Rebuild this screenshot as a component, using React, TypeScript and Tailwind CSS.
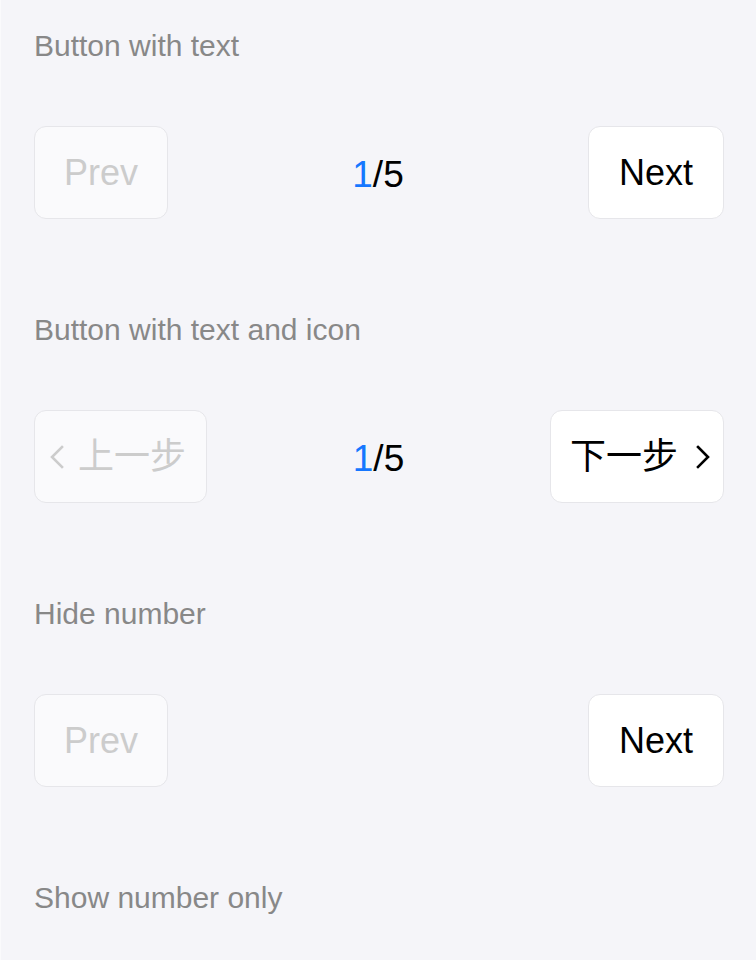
import React from 'react';

const Chevron: React.FC<{ dir: 'left' | 'right'; className?: string }> = ({ dir, className }) => (
  <svg width="14" height="24" viewBox="0 0 14 24" fill="none" className={className}>
    <polyline
      points={dir === 'left' ? '12,2 2,12 12,22' : '2,2 12,12 2,22'}
      stroke="currentColor"
      strokeWidth="2.6"
      strokeLinecap="square"
      strokeLinejoin="miter"
    />
  </svg>
);

const PageButton: React.FC<{ disabled?: boolean; className?: string; children: React.ReactNode }> = ({
  disabled,
  className = 'px-[29px]',
  children,
}) => (
  <button
    className={`h-[93px] rounded-[12px] border border-[#e6e6ea] flex items-center text-[36px] leading-none ${className} ${
      disabled ? 'bg-[#fafafc] text-[#cccccc]' : 'bg-white text-black'
    }`}
  >
    {children}
  </button>
);

const Counter = () => (
  <div className="text-[37px] leading-none text-black pt-[3px]">
    <span className="text-[#1677ff]">1</span>/5
  </div>
);

const Section: React.FC<{ title: string; children?: React.ReactNode }> = ({ title, children }) => (
  <section className="pt-[26px] pb-[65px]">
    <h3 className="text-[30px] leading-[40px] text-[#888888] font-normal">{title}</h3>
    {children && <div className="mt-[60px] flex items-center justify-between">{children}</div>}
  </section>
);

export default function App() {
  return (
    <div
      className="min-h-screen bg-[#f5f5f9] border-l border-[#fafafc] pl-[33px] pr-[32px]"
      style={{ fontFamily: '"Liberation Sans", "Noto Sans CJK SC", sans-serif' }}
    >
      <Section title="Button with text">
        <PageButton disabled>Prev</PageButton>
        <Counter />
        <PageButton className="px-[30px]">Next</PageButton>
      </Section>

      <Section title="Button with text and icon">
        <PageButton disabled className="pl-[15px] pr-[20px] gap-[14px]">
          <Chevron dir="left" />
          <span>上一步</span>
        </PageButton>
        <Counter />
        <PageButton className="pl-[19px] pr-[13px] gap-[18px]">
          <span>下一步</span>
          <Chevron dir="right" />
        </PageButton>
      </Section>

      <Section title="Hide number">
        <PageButton disabled>Prev</PageButton>
        <PageButton className="px-[30px]">Next</PageButton>
      </Section>

      <Section title="Show number only" />
    </div>
  );
}
